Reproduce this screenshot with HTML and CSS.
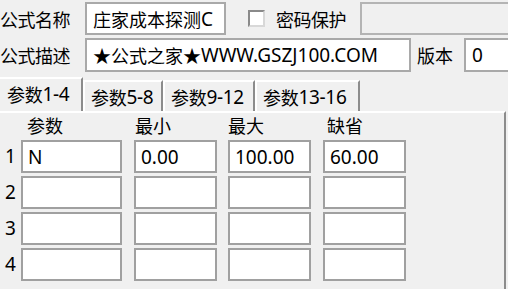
FILE: index.html
```html
<!DOCTYPE html>
<html lang="zh-CN">
<head>
    <meta charset="UTF-8">
    <title>公式编辑</title>
    <link rel="stylesheet" href="styles.css">
</head>
<body>
    <div class="dialog">
        <div class="field-row row-name">
            <span class="label">公式名称</span>
            <div class="text-box name-box">庄家成本探测<span class="latin">C</span></div>
            <span class="check"></span>
            <span class="check-label">密码保护</span>
            <div class="text-box password-box"></div>
        </div>

        <div class="field-row row-desc">
            <span class="label">公式描述</span>
            <div class="text-box desc-box">★公式之家★<span class="latin">WWW.GSZJ100.COM</span></div>
            <span class="version-label">版本</span>
            <div class="text-box version-box latin">0</div>
        </div>

        <div class="tabs">
            <div class="tab active">参数<span class="latin">1-4</span></div>
            <div class="tab t2">参数<span class="latin">5-8</span></div>
            <div class="tab t3">参数<span class="latin">9-12</span></div>
            <div class="tab t4">参数<span class="latin">13-16</span></div>
        </div>

        <div class="panel">
            <div class="params">
                <span></span>
                <span class="head h1">参数</span>
                <span class="head h2">最小</span>
                <span class="head h3">最大</span>
                <span class="head h4">缺省</span>

                <span class="num">1</span>
                <div class="cell wide">N</div>
                <div class="cell">0.00</div>
                <div class="cell">100.00</div>
                <div class="cell">60.00</div>

                <span class="num">2</span>
                <div class="cell wide"></div>
                <div class="cell"></div>
                <div class="cell"></div>
                <div class="cell"></div>

                <span class="num">3</span>
                <div class="cell wide"></div>
                <div class="cell"></div>
                <div class="cell"></div>
                <div class="cell"></div>

                <span class="num">4</span>
                <div class="cell wide"></div>
                <div class="cell"></div>
                <div class="cell"></div>
                <div class="cell"></div>
            </div>
        </div>
    </div>
</body>
</html>
```

FILE: styles.css
```css
html, body {
    margin: 0;
    background: #f0f0f0;
    overflow: hidden;
}

.dialog {
    width: 508px;
    height: 289px;
    font-family: "Noto Sans", "Noto Sans CJK SC", sans-serif;
    font-size: 18px;
    color: #000;
    padding-top: 2px;
    box-sizing: border-box;
}

.latin,
.cell,
.num {
    font-size: 19px;
}

.field-row {
    display: flex;
    align-items: center;
    white-space: nowrap;
}

.row-name {
    height: 33px;
}

.row-desc {
    height: 34px;
    margin-top: 3px;
}

.label {
    width: 85px;
    flex: none;
    letter-spacing: -0.5px;
}

.text-box {
    height: 100%;
    box-sizing: border-box;
    border: 2px solid #a9a9a9;
    background: white;
    display: flex;
    align-items: center;
    padding-left: 6px;
    flex: none;
    overflow: hidden;
}

.name-box {
    width: 141px;
}

.check {
    width: 17px;
    height: 17px;
    box-sizing: border-box;
    border: 2px solid #8a8a8a;
    border-right-color: #d8d8d8;
    border-bottom-color: #d8d8d8;
    background: white;
    margin-left: 22px;
    flex: none;
}

.check-label {
    margin-left: 11px;
    width: 84px;
    flex: none;
    letter-spacing: -0.5px;
}

.password-box {
    width: 160px;
    background: #f0f0f0;
    border-color: #b4b4b4;
}

.desc-box {
    width: 326px;
}

.version-label {
    width: 53px;
    padding-left: 6px;
    box-sizing: border-box;
    flex: none;
}

.version-box {
    width: 60px;
}

/* tab strip */
.tabs {
    display: flex;
    align-items: flex-end;
    height: 34px;
    margin-top: 5px;
}

.tab {
    height: 31px;
    box-sizing: border-box;
    border-top: 2px solid #fff;
    border-left: 2px solid #fff;
    border-right: 2px solid #8c8c8c;
    padding-left: 6px;
    display: flex;
    align-items: center;
    white-space: nowrap;
    letter-spacing: -0.3px;
}

.tab.active {
    width: 83px;
    height: 34px;
    padding-left: 7px;
    padding-bottom: 2px;
    border-left: none;
}

.tab.t2 { width: 80px; }
.tab.t3 { width: 92px; }
.tab.t4 { width: 105px; }

.panel {
    width: 506px;
    height: 190px;
    box-sizing: border-box;
    border-top: 2px solid #fff;
    border-right: 2px solid #8c8c8c;
    padding-top: 2px;
}

.params {
    display: grid;
    grid-template-columns: 21px 113px 94px 95px 83px;
    grid-template-rows: 22px repeat(4, 33px);
    row-gap: 3px;
    align-items: center;
}

.head {
    line-height: 22px;
}

.h1 { padding-left: 6px; }
.h2 { padding-left: 1px; }
.h3 { padding-left: 0; }
.h4 { padding-left: 4px; }

.num {
    text-align: center;
    padding-bottom: 2px;
}

.cell {
    width: 83px;
    height: 33px;
    box-sizing: border-box;
    border: 2px solid #a0a0a0;
    background: white;
    display: flex;
    align-items: center;
    padding-left: 5px;
}

.cell.wide {
    width: 101px;
}
```
